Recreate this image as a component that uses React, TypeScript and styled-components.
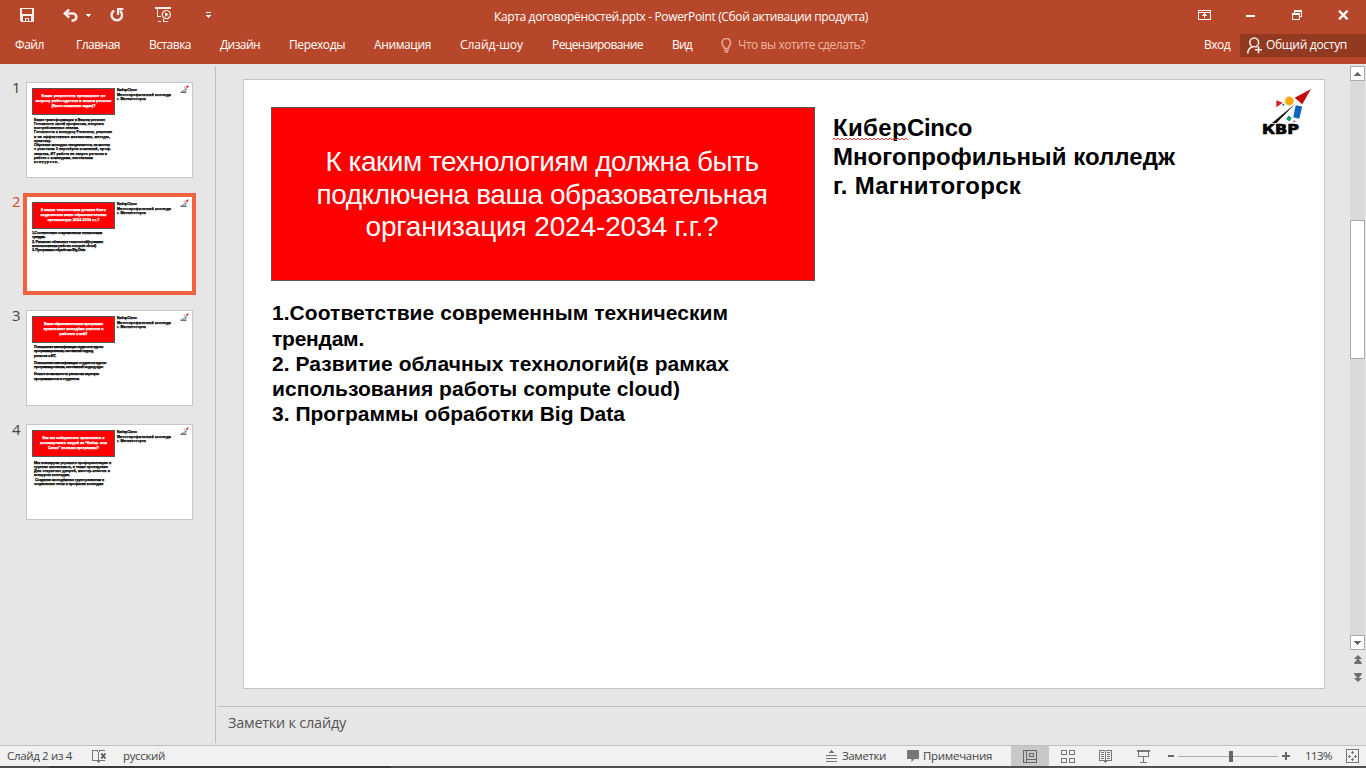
import React, { useLayoutEffect, useRef, useState } from "react";
import styled, { createGlobalStyle } from "styled-components";

const ui = `"Open Sans", "Noto Sans", sans-serif`;
const arial = `"Liberation Sans", Arial, sans-serif`;

const GlobalStyle = createGlobalStyle`
  * { box-sizing: border-box; }
  body { margin: 0; overflow: hidden; font-family: ${ui}; font-size: 12px; }
  svg { display: block; flex: none; }
`;

/* Text whose tracking is adjusted so that the line takes a given width */
const Tracked = styled.span`
  display: inline-block;
  white-space: pre;
  flex: none;
`;

function Fit({ w, children }: { w: number; children: string }) {
  const ref = useRef<HTMLSpanElement>(null);
  const [spacing, setSpacing] = useState(0);
  useLayoutEffect(() => {
    const el = ref.current;
    if (!el) return;
    const natural = el.getBoundingClientRect().width;
    setSpacing((w - natural) / children.length);
  }, []);
  return (
    <Tracked ref={ref} style={{ letterSpacing: spacing }}>
      {children}
    </Tracked>
  );
}

const Window = styled.div`
  width: 1366px;
  height: 768px;
  display: flex;
  flex-direction: column;
  background: #e6e6e6;
`;

const Header = styled.header`
  height: 64px;
  flex: none;
  background: #b7472a;
  color: #fff;
`;

const TitleBar = styled.div`
  height: 33px;
  display: flex;
  align-items: center;
  padding: 0 17px 3px 20px;
`;

const QuickAccess = styled.div`
  width: 474px;
  display: flex;
  align-items: center;
`;

const DocTitle = styled.div`
  flex: 1;
  line-height: 16px;
  padding-top: 4px;
`;

const WindowButtons = styled.div`
  display: flex;
  align-items: center;
`;

const Gap = styled.i<{ $w: number }>`
  width: ${(p) => p.$w}px;
  flex: none;
`;

const Ribbon = styled.nav`
  height: 24px;
  display: flex;
  align-items: center;
  padding-left: 15px;
  line-height: 16px;
`;

const Tabs = styled.div`
  display: flex;
  gap: 29px;
`;

const TellMe = styled.div`
  display: flex;
  align-items: center;
  gap: 6px;
  margin-left: 29px;
  color: #eeb5a2;
`;

const SignIn = styled.div`
  margin-left: auto;
  margin-right: 10px;
`;

const Share = styled.div`
  width: 126px;
  height: 23px;
  display: flex;
  align-items: center;
  gap: 4px;
  padding-left: 7px;
  background: #923922;
`;

const Workspace = styled.div`
  height: 681px;
  flex: none;
  display: flex;
`;

const Outline = styled.aside`
  width: 216px;
  height: 677px;
  margin-top: 2px;
  padding-top: 16px;
  border-right: 1px solid #bebebe;
  display: flex;
  flex-direction: column;
  gap: 18px;
`;

const ThumbRow = styled.div<{ $active?: boolean }>`
  height: 96px;
  display: flex;
  padding-left: 12px;
  color: ${(p) => (p.$active ? "#d24726" : "#444")};
`;

const ThumbNumber = styled.div`
  width: 14px;
  font-size: 15px;
  line-height: 10px;
`;

const ThumbSlide = styled.div<{ $active?: boolean }>`
  width: 167px;
  height: 96px;
  background: #fff;
  color: #000;
  border: 1px solid ${(p) => (p.$active ? "#f1623f" : "#c6c6c6")};
  box-shadow: ${(p) => (p.$active ? "0 0 0 3px #f1623f" : "none")};
  padding: 5px 3px 5px 5px;
  font: bold 3.6px/4.25px ${arial};
  -webkit-text-stroke: 0.25px currentColor;
`;

const ThumbTop = styled.div`
  display: flex;
  height: 27px;
`;

const ThumbTitle = styled.div`
  width: 83px;
  flex: none;
  height: 27px;
  background: #f00;
  border: 1px solid #555;
  color: #fff;
  display: flex;
  flex-direction: column;
  align-items: center;
  justify-content: center;
  line-height: 4.7px;
`;

const ThumbTeam = styled.div`
  width: 65px;
  flex: none;
  padding-left: 2px;
  line-height: 4.7px;
  display: flex;
  flex-direction: column;
  align-items: flex-start;
`;

const ThumbLogo = styled.div`
  margin-top: -3px;
`;

const ThumbBody = styled.div<{ $x: number; $y: number }>`
  padding: ${(p) => p.$y}px 0 0 ${(p) => p.$x}px;
  display: flex;
  flex-direction: column;
  align-items: flex-start;
`;

const ThumbBlank = styled.div<{ $h: number }>`
  height: ${(p) => p.$h}px;
`;

const Editor = styled.main`
  flex: 1;
  display: flex;
  flex-direction: column;
  padding-left: 2px;
`;

const Stage = styled.div`
  height: 642px;
  flex: none;
  display: flex;
  padding: 15px 0 0 25px;
`;

const Slide = styled.section`
  width: 1082px;
  height: 610px;
  background: #fff;
  border: 1px solid #c6c6c6;
  padding: 27px 12px 0 27px;
  font-family: ${arial};
  color: #000;
`;

const SlideTop = styled.div`
  display: flex;
  height: 174px;
`;

const QuestionBox = styled.div`
  width: 544px;
  height: 174px;
  background: #f00;
  border: 1px solid #555;
  color: #fff;
  font-size: 28px;
  line-height: 32.7px;
  display: flex;
  flex-direction: column;
  align-items: center;
  padding: 38px 2px 0 0;
`;

const Team = styled.div`
  flex: 1;
  padding: 6px 0 0 18px;
  font-weight: bold;
  font-size: 24px;
  line-height: 29px;
  display: flex;
  flex-direction: column;
  align-items: flex-start;
`;

const Misspelled = styled.span`
  position: relative;
  display: inline-flex;
  svg {
    position: absolute;
    left: 0;
    top: 24px;
  }
`;

const TeamName = styled.div`
  display: flex;
`;

const Answers = styled.div`
  padding: 19.3px 0 0 1px;
  font-weight: bold;
  font-size: 21px;
  line-height: 25.2px;
  display: flex;
  flex-direction: column;
  align-items: flex-start;
`;

const Logo = styled.div`
  margin: -19px 0 0 0;
`;

const ScrollColumn = styled.div`
  margin: -13px 0 0 25px;
  width: 15px;
  display: flex;
  flex-direction: column;
  align-items: center;
`;

const ScrollButton = styled.div`
  width: 15px;
  height: 15px;
  border: 1px solid #ababab;
  background: #fff;
  display: flex;
  align-items: center;
  justify-content: center;
`;

const ScrollTrack = styled.div`
  width: 15px;
  height: 554px;
  background: #dadada;
  padding-top: 139px;
`;

const ScrollThumb = styled.div`
  height: 139px;
  background: #fff;
  border: 1px solid #ababab;
`;

const SlideSteps = styled.div`
  display: flex;
  flex-direction: column;
  gap: 9px;
  padding-top: 5px;
`;

const Notes = styled.div`
  border-top: 1px solid #bebebe;
  height: 39px;
  padding: 6px 0 0 10px;
  font-size: 14.5px;
  line-height: 20px;
  color: #555;
`;

const Status = styled.footer`
  height: 21px;
  flex: none;
  background: #f1f1f1;
  border-top: 1px solid #bebebe;
  display: flex;
  align-items: center;
  color: #444;
  font-size: 11.5px;
  line-height: 16px;
  padding-left: 7px;
`;

const StatusRight = styled.div`
  margin-left: auto;
  display: flex;
  align-items: center;
  height: 20px;
  padding-right: 7px;
`;

const ViewButton = styled.div<{ $active?: boolean }>`
  width: 38px;
  height: 20px;
  background: ${(p) => (p.$active ? "#c8c8c8" : "transparent")};
  display: flex;
  align-items: center;
  justify-content: center;
`;

const ZoomTrack = styled.div`
  width: 100px;
  height: 11px;
  margin: 0 4px;
  padding-left: 51px;
  background: linear-gradient(#ababab, #ababab) 0 5px / 100% 1px no-repeat;
`;

const ZoomHandle = styled.div`
  width: 4px;
  height: 11px;
  background: #666;
`;

const ScreenEdge = styled.div`
  height: 2px;
  flex: none;
  background: #505050;
  padding-left: 49px;
`;

const EdgeShade = styled.div`
  width: 342px;
  height: 2px;
  background: #3a3a3a;
`;

const SaveIcon = () => (
  <svg width="14" height="14" viewBox="0 0 14 14" fill="#fbefec" fillRule="evenodd" shapeRendering="crispEdges">
    <path d="M0 0H14V14H1L0 13ZM2 1V6H12V1ZM3 8V13H5V10H9V13H11V8ZM6 11V13H8V11Z" />
  </svg>
);

const UndoIcon = () => (
  <svg width="15" height="13" viewBox="0 0 15 13" fill="none" stroke="#f8ece8" strokeWidth="2.5">
    <path d="M1.5 4.5H9.5C12 4.5 13.3 6 13.3 8S12 11.5 8.5 11.8" />
    <path d="M6.2 .4 1.8 4.5 6.2 8.7" />
  </svg>
);

const RedoIcon = () => (
  <svg width="14" height="14" viewBox="0 0 14 14" fill="none" stroke="#f8ece8" strokeWidth="2.4">
    <path d="M4.2 2.6A5.2 5.2 0 1 0 10 3" />
    <path d="M8 7V1.2H13.4" strokeWidth="2.2" />
  </svg>
);

const ShowIcon = () => (
  <svg width="17" height="16" viewBox="0 0 17 16" fill="none" stroke="#f8ece8">
    <path d="M0 1H16" strokeWidth="2" shapeRendering="crispEdges" />
    <path d="M2.5 2V9.5H6M8.5 12V14M3 14.5H6M8 14.5H13" shapeRendering="crispEdges" />
    <circle cx="11.3" cy="7.6" r="4.1" strokeWidth="1.2" />
    <path d="M10 5.2 13.6 7.6 10 10Z" fill="#f8ece8" stroke="none" />
  </svg>
);

const Caret = ({ bar = false }: { bar?: boolean }) => (
  <svg width="5" height={bar ? 6 : 3} viewBox={bar ? "0 0 5 6" : "0 0 5 3"} fill="#fff" shapeRendering="crispEdges">
    {bar && <path d="M0 0H5V1H0Z" />}
    <path transform={bar ? "translate(0 3)" : undefined} d="M0 0H5V1H4V2H3V3H2V2H1V1H0Z" />
  </svg>
);

const RibbonIcon = () => (
  <svg width="13" height="10" viewBox="0 0 13 10" fill="none" stroke="#fff" shapeRendering="crispEdges">
    <path d="M.5 .5H12.5V9.5H.5ZM1 2.5H12M6.5 3V8M5 4.5H8M4 5.5H9" />
  </svg>
);

const RestoreIcon = () => (
  <svg width="11" height="10" viewBox="0 0 11 10" fill="none" stroke="#fff" shapeRendering="crispEdges">
    <path d="M2.5 3V.5H9.5V6.5H8M2 1.5H10M.5 3.5H7.5V9.5H.5ZM0 4.5H8" />
  </svg>
);

const CloseIcon = () => (
  <svg width="11" height="10" viewBox="0 0 11 10" stroke="#fff" strokeWidth="2.4">
    <path d="M1 .7 9.6 9.3M9.6 .7 1 9.3" />
  </svg>
);

const BulbIcon = () => (
  <svg width="11" height="15" viewBox="0 0 11 15" fill="none" stroke="#e6a590">
    <path d="M3.5 10.5C3.5 8.6 1 7.5 1 4.8A4.3 4.3 0 0 1 9.6 4.8C9.6 7.5 7.2 8.6 7.2 10.5Z" strokeWidth="1.7" />
    <path d="M3 12.4H8M4 14H7" strokeWidth="1.3" />
  </svg>
);

const PersonIcon = () => (
  <svg width="15" height="17" viewBox="0 0 15 17" fill="none" stroke="#f8ece8" strokeWidth="1.6">
    <circle cx="7.2" cy="5.4" r="4.4" />
    <path d="M.7 16.5C.9 12.5 3 10.2 6 9.7M9.3 9.5 10 10.3" />
    <path d="M8 12.7H15M11.5 9.2V16.2" />
  </svg>
);

const ScrollArrow = ({ down = false }: { down?: boolean }) => (
  <svg width="7" height="4" viewBox="0 0 7 4" fill="#666" shapeRendering="crispEdges">
    <path transform={down ? "matrix(1 0 0 -1 0 4)" : undefined} d="M0 4V3H1V2H2V1H3V0H4V1H5V2H6V3H7V4Z" />
  </svg>
);

const DoubleArrow = ({ down = false }: { down?: boolean }) => (
  <svg width="8" height="9" viewBox="0 0 8 9" fill="#707070">
    <path transform={down ? "matrix(1 0 0 -1 0 9)" : undefined} d="M4 0 7.7 3.4V4H5V4.5L7.7 7.5V9H.3V7.5L3 4.5V4H.3V3.4Z" />
  </svg>
);

const SpellIcon = () => (
  <svg width="15" height="13" viewBox="0 0 15 13" fill="none" stroke="#777" shapeRendering="crispEdges">
    <path d="M6.5 13V2.5L5 .5H.5V10.5H5L6.5 12 8 10.5H12.5M6.5 2.5 8 .5H12.5" />
    <path d="M9.2 3.5 13.4 8.5M13.4 3.5 9.2 8.5" stroke="#555" strokeWidth="1.8" shapeRendering="auto" />
  </svg>
);

const NotesIcon = () => (
  <svg width="11" height="12" viewBox="0 0 11 12" fill="#777" shapeRendering="crispEdges">
    <path d="M5 0H6V1H7V2H8V3H3V2H4V1H5ZM0 5H11V6H0ZM0 8H11V9H0ZM0 11H11V12H0Z" />
  </svg>
);

const CommentIcon = () => (
  <svg width="12" height="12" viewBox="0 0 12 12" fill="#777">
    <path d="M1 0H11Q12 0 12 1V8Q12 9 11 9H7.5L4.5 12V9H1Q0 9 0 8V1Q0 0 1 0Z" />
  </svg>
);

const NormalIcon = () => (
  <svg width="14" height="13" viewBox="0 0 14 13" fill="none" stroke="#666" shapeRendering="crispEdges">
    <path d="M.5 .5H13.5V12.5H.5ZM3.5 1V12M4 9.5H13M6.5 3.5H10.5V6.5H6.5Z" />
  </svg>
);

const SorterIcon = () => (
  <svg width="14" height="13" viewBox="0 0 14 13" fill="none" stroke="#777" shapeRendering="crispEdges">
    <path d="M.5 .5H5.5V4.5H.5ZM8.5 .5H13.5V4.5H8.5ZM.5 8.5H5.5V12.5H.5ZM8.5 8.5H13.5V12.5H8.5Z" />
  </svg>
);

const ReadingIcon = () => (
  <svg width="14" height="13" viewBox="0 0 14 13" fill="none" stroke="#777" shapeRendering="crispEdges">
    <path d="M.5 .5H5L6.5 1.5 8 .5H12.5V10.5H8L6.5 12 5 10.5H.5ZM6.5 1V13M2 2.5H5M2 4.5H5M2 6.5H5M2 8.5H5M8 2.5H11M8 4.5H11M8 6.5H11M8 8.5H11" />
  </svg>
);

const PresentIcon = () => (
  <svg width="14" height="13" viewBox="0 0 14 13" fill="none" stroke="#777" shapeRendering="crispEdges">
    <path d="M0 1H13" strokeWidth="2" />
    <path d="M1.5 2V6.5H11.5V2M6.5 7V12M3 12.5H10" />
  </svg>
);

const FitWindowIcon = () => (
  <svg width="13" height="14" viewBox="0 0 13 14" fill="none" stroke="#777" shapeRendering="crispEdges">
    <path d="M.5 .5H12.5V13.5H.5Z" />
    <path d="M6.5 2V5M5 3.5H8M6.5 9V12M5 10.5H8M2 7.5H5M3.5 6V9M8 7.5H11M9.5 6V9" />
  </svg>
);

const LogoMark = () => (
  <svg width="50" height="48" viewBox="0 0 50 48">
    <path d="M49 1 40.3 16.3 32.7 9.7Z" fill="#c40a0a" />
    <circle cx="27.3" cy="13" r="4.4" fill="#fbaa07" />
    <path d="M14.3 12.3 20.7 14.7 14.3 19.3Z" fill="#d21c24" />
    <circle cx="21.3" cy="16.7" r="1" fill="#1464c0" />
    <path d="M33.5 15.5 10 35H14.5Z" fill="#111" />
    <path d="M33.7 17.3 40.2 18.5 37.3 30.7 31.2 29.3Z" fill="#0d63bf" />
    <path d="M26.5 27.5 29.8 30 27.5 33.4 24.2 31.2Z" fill="#159a80" />
    <circle cx="32.3" cy="33.3" r=".9" fill="#d21c24" />
    <text x="0" y="45.8" fontFamily="DejaVu Sans" fontWeight="bold" fontSize="13.6" textLength="37" lengthAdjust="spacingAndGlyphs" stroke="#000" strokeWidth=".7">
      КВР
    </text>
  </svg>
);

const ThumbLogoMark = () => (
  <svg width="9" height="9" viewBox="0 0 9 9">
    <path d="M8.8 .2 7.6 3.2 5.6 1.6Z" fill="#e02828" />
    <circle cx="4.6" cy="2.6" r="1" fill="#f3b78a" />
    <path d="M5.6 3 7 3.3 6.2 5.8 4 6Z" fill="#6f9fc4" />
    <path d="M5.4 3.4 1.4 6.4H2.8Z" fill="#777" />
    <path d="M.6 6.4H6.4V8H.6Z" fill="#6a6a6a" />
  </svg>
);

const squiggle =
  "M0 3" + Array.from({ length: 38 }, (_, i) => `L${i * 2 + 1} ${i % 2 ? 3 : 1}`).join("");

type Line = [string, number] | number;
type Thumb = { title: [string, number][]; body: Line[]; x: number; y: number; active?: boolean };

const thumbs: Thumb[] = [
  {
    title: [["Какие результаты превышают по", 64], ["запросу работодателя в вашем регионе", 76], ["(Квест-снижении задач)?", 44]],
    x: 2,
    y: 2.5,
    body: [
      ["Какие трансформации в Вашем регионе", 71],
      ["Готовность своей профессии, получать", 70],
      ["востребованные знания.", 45],
      ["Готовность к конкурсу Регионов, решение", 78],
      ["и на эффективные механизмы, методы,", 76],
      ["практику.", 17],
      ["Обучение молодых специалистов, на местах", 76],
      ["с участием 3 партнёров компаний, проф.", 77],
      ["занятия, ИТ работа на запрос региона и", 73],
      ["работа с командами, наставники", 59],
      ["конкурсов.", 25],
    ],
  },
  {
    active: true,
    title: [["К каким технологиям должна быть", 65], ["подключена ваша образовательная", 66], ["организация 2024-2034 г.г.?", 52]],
    x: 0,
    y: 2,
    body: [
      ["1.Соответствие современным техническим", 70],
      ["трендам.", 13],
      ["2. Развитие облачных технологий(в рамках", 71],
      ["использования работы compute cloud)", 64],
      ["3. Программы обработки Big Data", 53],
    ],
  },
  {
    title: [["Какие образовательные программы", 59], ["привлекают молодёжь учиться и", 60], ["работать в ней?", 28]],
    x: 2,
    y: 2,
    body: [
      ["Повышение квалификации педагогов курсы", 69],
      ["программирования, системный подход", 59],
      ["регионе и ИТ.", 22],
      3,
      ["Повышение квалификации студентов курсы", 72],
      ["программирования, системный подход курс", 69],
      3,
      ["Новые возможности развития карьеры", 65],
      ["программистов и студентов", 45],
    ],
  },
  {
    title: [["Как вы собираетесь привлекать и", 62], ["мотивировать людей на “Кибер- или", 67], ["Сиско” на ваши программы?", 51]],
    x: 2,
    y: 3.5,
    body: [
      ["Мы планируем улучшить профориентацию в", 77],
      ["группах школьников, а также проведение", 74],
      ["Дни открытых дверей, мастер-классы и", 76],
      ["конкурсы колледжа.", 36],
      [" Создание молодёжных групп развития в", 70],
      ["социальных сетях и профилях колледжа", 69],
    ],
  },
];

const tabs: [string, number][] = [
  ["Главная", 44],
  ["Вставка", 42],
  ["Дизайн", 40],
  ["Переходы", 56],
  ["Анимация", 57],
  ["Слайд-шоу", 63],
  ["Рецензирование", 91],
  ["Вид", 20],
];

export default function App() {
  return (
    <Window>
      <GlobalStyle />
      <Header>
        <TitleBar>
          <QuickAccess>
            <SaveIcon />
            <Gap $w={29} />
            <UndoIcon />
            <Gap $w={8} />
            <Caret />
            <Gap $w={19} />
            <RedoIcon />
            <Gap $w={31} />
            <ShowIcon />
            <Gap $w={34} />
            <Caret bar />
          </QuickAccess>
          <DocTitle>
            <Fit w={374}>Карта договорёностей.pptx - PowerPoint (Сбой активации продукта)</Fit>
          </DocTitle>
          <WindowButtons>
            <RibbonIcon />
            <Gap $w={35} />
            <svg width="9" height="4" viewBox="0 0 9 4">
              <path d="M0 2H9V4H0Z" fill="#fff" />
            </svg>
            <Gap $w={37} />
            <RestoreIcon />
            <Gap $w={35} />
            <CloseIcon />
          </WindowButtons>
        </TitleBar>
        <Ribbon>
          <Fit w={29}>Файл</Fit>
          <Gap $w={32} />
          <Tabs>
            {tabs.map(([label, w]) => (
              <Fit key={label} w={w}>{label}</Fit>
            ))}
          </Tabs>
          <TellMe>
            <BulbIcon />
            <Fit w={127}>Что вы хотите сделать?</Fit>
          </TellMe>
          <SignIn>
            <Fit w={26}>Вход</Fit>
          </SignIn>
          <Share>
            <PersonIcon />
            <Fit w={81}>Общий доступ</Fit>
          </Share>
        </Ribbon>
      </Header>

      <Workspace>
        <Outline>
          {thumbs.map((t, i) => (
            <ThumbRow key={i} $active={t.active}>
              <ThumbNumber>{i + 1}</ThumbNumber>
              <ThumbSlide $active={t.active}>
                <ThumbTop>
                  <ThumbTitle>
                    {t.title.map(([s, w]) => (
                      <Fit key={s} w={w}>{s}</Fit>
                    ))}
                  </ThumbTitle>
                  <ThumbTeam>
                    <Fit w={20}>КиберCinco</Fit>
                    <Fit w={54}>Многопрофильный колледж</Fit>
                    <Fit w={29}>г. Магнитогорск</Fit>
                  </ThumbTeam>
                  <ThumbLogo>
                    <ThumbLogoMark />
                  </ThumbLogo>
                </ThumbTop>
                <ThumbBody $x={t.x} $y={t.y}>
                  {t.body.map((l, k) =>
                    typeof l === "number" ? <ThumbBlank key={k} $h={l} /> : <Fit key={k} w={l[1]}>{l[0]}</Fit>
                  )}
                </ThumbBody>
              </ThumbSlide>
            </ThumbRow>
          ))}
        </Outline>

        <Editor>
          <Stage>
            <Slide>
              <SlideTop>
                <QuestionBox>
                  <Fit w={433}>К каким технологиям должна быть</Fit>
                  <Fit w={451}>подключена ваша образовательная</Fit>
                  <Fit w={353}>организация 2024-2034 г.г.?</Fit>
                </QuestionBox>
                <Team>
                  <TeamName>
                    <Misspelled>
                      <Fit w={74}>Кибер</Fit>
                      <svg width="78" height="4" viewBox="0 0 78 4">
                        <path d={squiggle} fill="none" stroke="#f22" strokeWidth=".9" />
                      </svg>
                    </Misspelled>
                    <Fit w={65}>Cinco</Fit>
                  </TeamName>
                  <Fit w={342}>Многопрофильный колледж</Fit>
                  <Fit w={188}>г. Магнитогорск</Fit>
                </Team>
                <Logo>
                  <LogoMark />
                </Logo>
              </SlideTop>
              <Answers>
                <Fit w={456}>1.Соответствие современным техническим</Fit>
                <Fit w={92}>трендам.</Fit>
                <Fit w={457}>2. Развитие облачных технологий(в рамках</Fit>
                <Fit w={408}>использования работы compute cloud)</Fit>
                <Fit w={353}>3. Программы обработки Big Data</Fit>
              </Answers>
            </Slide>
            <ScrollColumn>
              <ScrollButton>
                <ScrollArrow />
              </ScrollButton>
              <ScrollTrack>
                <ScrollThumb />
              </ScrollTrack>
              <ScrollButton>
                <ScrollArrow down />
              </ScrollButton>
              <SlideSteps>
                <DoubleArrow />
                <DoubleArrow down />
              </SlideSteps>
            </ScrollColumn>
          </Stage>
          <Notes>
            <Fit w={118}>Заметки к слайду</Fit>
          </Notes>
        </Editor>
      </Workspace>

      <Status>
        <Fit w={65}>Слайд 2 из 4</Fit>
        <Gap $w={20} />
        <SpellIcon />
        <Gap $w={16} />
        <Fit w={42}>русский</Fit>
        <StatusRight>
          <NotesIcon />
          <Gap $w={5} />
          <Fit w={44}>Заметки</Fit>
          <Gap $w={21} />
          <CommentIcon />
          <Gap $w={4} />
          <Fit w={69}>Примечания</Fit>
          <Gap $w={19} />
          <ViewButton $active>
            <NormalIcon />
          </ViewButton>
          <ViewButton>
            <SorterIcon />
          </ViewButton>
          <ViewButton>
            <ReadingIcon />
          </ViewButton>
          <ViewButton>
            <PresentIcon />
          </ViewButton>
          <Gap $w={5} />
          <svg width="6" height="2" viewBox="0 0 6 2">
            <path d="M0 0H6V2H0Z" fill="#666" />
          </svg>
          <ZoomTrack>
            <ZoomHandle />
          </ZoomTrack>
          <svg width="8" height="8" viewBox="0 0 8 8">
            <path d="M3 0H5V3H8V5H5V8H3V5H0V3H3Z" fill="#666" />
          </svg>
          <Gap $w={15} />
          <Fit w={27}>113%</Fit>
          <Gap $w={14} />
          <FitWindowIcon />
        </StatusRight>
      </Status>
      <ScreenEdge>
        <EdgeShade />
      </ScreenEdge>
    </Window>
  );
}
